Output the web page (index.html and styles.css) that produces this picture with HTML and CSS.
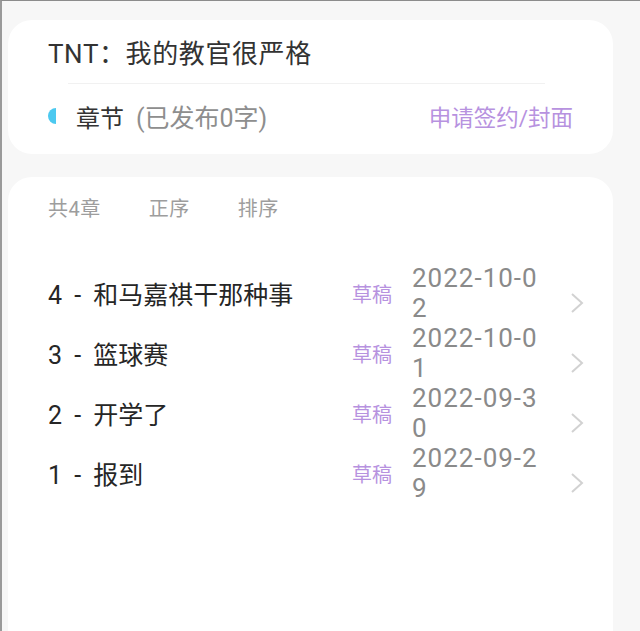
FILE: index.html
```html
<!DOCTYPE html>
<html lang="zh-CN">
<head>
  <meta charset="UTF-8">
  <meta name="viewport" content="width=device-width, initial-scale=1.0">
  <title>作品管理</title>
  <link rel="stylesheet" href="styles.css">
</head>
<body>
  <div class="page">
    <div class="card book-card">
      <div class="book-title">TNT：我的教官很严格</div>
      <div class="divider"></div>
      <div class="book-row">
        <span class="dot"></span>
        <span class="section-name">章节</span>
        <span class="section-count">(已发布0字)</span>
        <a href="#" class="sign-link">申请签约/封面</a>
      </div>
    </div>

    <div class="card chapter-card">
      <div class="chapter-head">
        <span>共4章</span>
        <span>正序</span>
        <span>排序</span>
      </div>

      <div class="chapter-list">
        <div class="chapter-item">
          <div class="chapter-name">4 - 和马嘉祺干那种事</div>
          <div class="chapter-state">草稿</div>
          <div class="chapter-date">2022-10-02</div>
          <svg class="chevron" width="15" height="22" viewBox="0 0 15 22"><polyline points="2,2 12,11 2,20" fill="none" stroke="#d2d2d2" stroke-width="2"/></svg>
        </div>
        <div class="chapter-item">
          <div class="chapter-name">3 - 篮球赛</div>
          <div class="chapter-state">草稿</div>
          <div class="chapter-date">2022-10-01</div>
          <svg class="chevron" width="15" height="22" viewBox="0 0 15 22"><polyline points="2,2 12,11 2,20" fill="none" stroke="#d2d2d2" stroke-width="2"/></svg>
        </div>
        <div class="chapter-item">
          <div class="chapter-name">2 - 开学了</div>
          <div class="chapter-state">草稿</div>
          <div class="chapter-date">2022-09-30</div>
          <svg class="chevron" width="15" height="22" viewBox="0 0 15 22"><polyline points="2,2 12,11 2,20" fill="none" stroke="#d2d2d2" stroke-width="2"/></svg>
        </div>
        <div class="chapter-item">
          <div class="chapter-name">1 - 报到</div>
          <div class="chapter-state">草稿</div>
          <div class="chapter-date">2022-09-29</div>
          <svg class="chevron" width="15" height="22" viewBox="0 0 15 22"><polyline points="2,2 12,11 2,20" fill="none" stroke="#d2d2d2" stroke-width="2"/></svg>
        </div>
      </div>
    </div>
  </div>
</body>
</html>
```

FILE: styles.css
```css
* {
  box-sizing: border-box;
  font-family: Roboto, 'Noto Sans CJK SC', sans-serif;
}

html, body {
  margin: 0;
  height: 100%;
  overflow: hidden;
}

body {
  background-color: #f7f7f7;
}

.page {
  height: 100%;
  display: flex;
  flex-direction: column;
  border-top: 1px solid #8c8c8c;
  border-left: 2px solid #9a9a9a;
  padding: 19px 27px 0 6px;
}

.card {
  background-color: white;
  border-radius: 24px;
  padding: 0 40px;
}

.book-card {
  padding-top: 16px;
  padding-bottom: 20px;
}

.book-title {
  font-size: 26px;
  line-height: 36px;
  letter-spacing: 0.6px;
  color: #333;
}

.divider {
  height: 1px;
  background-color: #f1f1f1;
  margin: 11px 28px 0 20px;
}

.book-row {
  display: flex;
  align-items: center;
  margin-top: 14px;
  height: 36px;
}

.dot {
  width: 8px;
  height: 16px;
  border-radius: 8px 0 0 8px;
  background-color: #4cc9f0;
  margin-right: 20px;
}

.section-name {
  font-size: 24px;
  color: #333;
}

.section-count {
  font-size: 25px;
  color: #8e8e8e;
  margin-left: 12px;
}

.sign-link {
  margin-left: auto;
  font-size: 22.5px;
  color: #b792df;
  text-decoration: none;
}

.chapter-card {
  flex: 1;
  margin-top: 23px;
  padding-top: 18px;
  border-radius: 24px 24px 0 0;
}

.chapter-head {
  display: flex;
  gap: 48px;
  font-size: 20px;
  line-height: 28px;
  letter-spacing: 0.5px;
  color: #9d9d9d;
}

.chapter-list {
  margin-top: 40px;
}

.chapter-item {
  display: flex;
  align-items: center;
  height: 60px;
}

.chapter-name {
  flex: 1;
  font-size: 25px;
  word-spacing: 6px;
  color: #262626;
}

.chapter-state {
  font-size: 20px;
  color: #b792df;
  margin-right: 20px;
}

.chapter-date {
  width: 136px;
  font-size: 26px;
  line-height: 30px;
  letter-spacing: 1px;
  color: #8a8a8a;
  word-break: break-all;
}

.chevron {
  margin-left: 22px;
  margin-right: -12px;
  margin-top: 20px;
}
```
